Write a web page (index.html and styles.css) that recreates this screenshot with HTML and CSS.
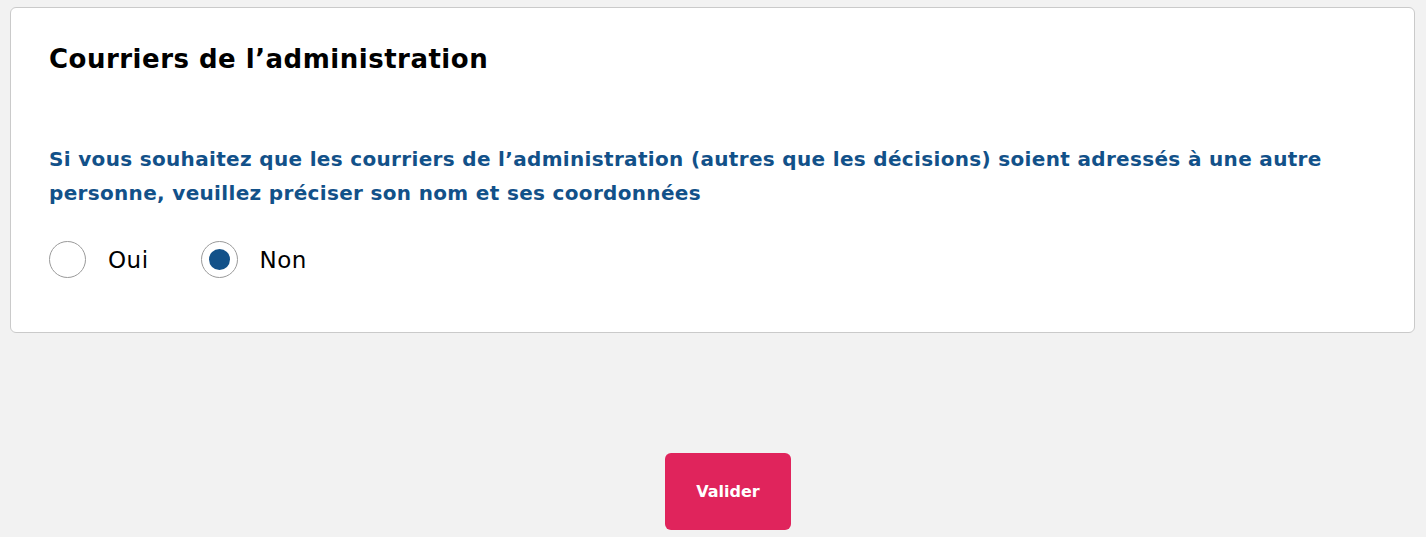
FILE: index.html
```html
<!DOCTYPE html>
<html lang="fr">
<head>
    <meta charset="utf-8">
    <link rel="stylesheet" href="styles.css">
    <title>Courriers de l’administration</title>
</head>
<body>
<div class="page">
    <div class="card">
        <h2 class="card-title">Courriers de l’administration</h2>
        <p class="question">Si vous souhaitez que les courriers de l’administration (autres que les décisions) soient adressés à une autre personne, veuillez préciser son nom et ses coordonnées</p>
        <div class="choices">
            <label class="choice">
                <input type="radio" name="courriers" value="oui">
                <span class="radio"></span>
                <span class="choice-label">Oui</span>
            </label>
            <label class="choice">
                <input type="radio" name="courriers" value="non" checked>
                <span class="radio"></span>
                <span class="choice-label">Non</span>
            </label>
        </div>
    </div>

    <div class="actions">
        <button class="btn-valider" type="button">Valider</button>
    </div>
</div>
</body>
</html>
```

FILE: styles.css
```css
body {
    margin: 0;
    background-color: #f2f2f2;
    font-family: "DejaVu Sans", "Noto Sans", sans-serif;
    color: #000;
}

.page {
    padding: 7px 11px 0 10px;
}

.card {
    background-color: #fff;
    border: 1px solid #cacaca;
    border-radius: 6px;
    padding: 34px 38px 54px 38px;
}

.card-title {
    margin: 0;
    font-size: 26px;
    line-height: 34px;
    font-weight: 700;
    letter-spacing: 0.5px;
}

.question {
    margin: 66px 0 0 0;
    color: #125189;
    font-size: 20px;
    line-height: 34px;
    font-weight: 600;
    letter-spacing: 0.33px;
}

.choices {
    display: flex;
    align-items: center;
    gap: 52px;
    margin-top: 31px;
}

.choice {
    display: flex;
    align-items: center;
    gap: 22px;
    cursor: pointer;
}

.choice input {
    display: none;
}

.radio {
    width: 35px;
    height: 35px;
    border: 1px solid #9a9a9a;
    border-radius: 50%;
    background-color: #fff;
    display: flex;
    align-items: center;
    justify-content: center;
}

.choice input:checked + .radio::after {
    content: "";
    width: 21px;
    height: 21px;
    border-radius: 50%;
    background-color: #125189;
}

.choice-label {
    font-size: 23px;
    font-weight: 400;
    letter-spacing: 0.5px;
}

.actions {
    display: flex;
    justify-content: center;
    margin: 120px 0 0 31px;
}

.btn-valider {
    width: 126px;
    height: 77px;
    border: none;
    border-radius: 6px;
    background-color: #e0245c;
    color: #fff;
    font-family: "DejaVu Sans", "Noto Sans", sans-serif;
    font-size: 16px;
    font-weight: 700;
}
```
